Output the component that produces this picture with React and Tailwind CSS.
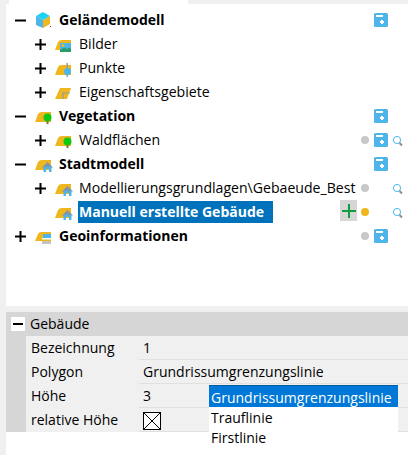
import React from 'react';

const Expander = ({ open }) => (
  <svg width="11" height="11" viewBox="0 0 11 11" className="block">
    <rect x="0" y="4.5" width="11" height="2" fill="#000" />
    {!open && <rect x="4.5" y="0" width="2" height="11" fill="#000" />}
  </svg>
);

const Base = () => <path d="M0 15 L3 7 Q4 5 7 5 H16 V15 Z" fill="#efb71d" />;

const House = () => (
  <>
    <path d="M7 12.5 L12.5 7 L18 12.5 Z" fill="#7d96ab" />
    <path d="M8.5 12 H16.5 V17 H14 V14 H11 V17 H8.5 Z" fill="#4db5ea" />
  </>
);

const Tree = () => (
  <>
    <rect x="11.5" y="13" width="2" height="4" fill="#8a6d3b" />
    <circle cx="12.5" cy="10.5" r="4" fill="#12c912" />
  </>
);

const NodeIcon = ({ type }) => (
  <svg width="18" height="18" viewBox="0 0 18 18" className="block">
    {type === 'cube' && (
      <>
        <path d="M1 5 L8 9 V17 L2 14.5 Q1 14 1 13 Z" fill="#4db5ea" />
        <path d="M8 9 L15 5 V13 L8 17 Z" fill="#efb71d" />
        <path d="M1 5 L7 1.5 Q8 1 9 1.5 L15 5 L8 9 Z" fill="#1fd0f7" />
        <rect x="15" y="15" width="1" height="1" fill="#e81123" />
      </>
    )}
    {type === 'images' && (
      <>
        <Base />
        <rect x="5" y="8" width="11" height="9" fill="#4db5ea" />
        <circle cx="8" cy="10.5" r="1.4" fill="#efb71d" />
        <path d="M5 17 V15 L9 12.5 L12 14 L14 12.5 L16 14 V17 Z" fill="#2b9b6a" />
      </>
    )}
    {type === 'points' && (
      <>
        <path d="M0 16 L3 8 Q4 6 7 6 H16 V16 Z" fill="#efb71d" />
        <rect x="11.5" y="4" width="1.4" height="14" fill="#8f9aa3" />
        <circle cx="12.5" cy="12.5" r="3.5" fill="#4db5ea" />
      </>
    )}
    {type === 'areas' && (
      <>
        <path d="M0 16 L5 5 H16 L12 16 Z" fill="#efb71d" />
        <path d="M7 10 H15 M8 10 V16" stroke="#8f9aa3" strokeWidth="1.2" fill="none" />
      </>
    )}
    {type === 'tree' && (
      <>
        <Base />
        <Tree />
      </>
    )}
    {type === 'city' && (
      <>
        <Base />
        <House />
      </>
    )}
    {type === 'geo' && (
      <>
        <path d="M0 14 L3 7 Q4 5 6 5 H16 V14 Z" fill="#efb71d" />
        <rect x="8" y="7" width="8" height="4" fill="#4db5ea" />
        <rect x="7" y="11" width="9" height="1.5" fill="#ffffff" />
        <rect x="7" y="14" width="9" height="3" fill="#c4c4c4" />
      </>
    )}
  </svg>
);

const SaveIcon = () => (
  <svg width="14" height="14" viewBox="0 0 14 14" className="block">
    <rect x="0" y="0" width="14" height="14" rx="1.5" fill="#4db5ea" />
    <rect x="2" y="2" width="7" height="2" fill="#fff" />
    <path d="M7 7 h2 v1 h1 v2 h-1 v1 h-2 v-1 h-1 v-2 h1 Z" fill="#fff" />
  </svg>
);

const SearchIcon = () => (
  <svg width="10" height="11" viewBox="0 0 10 11" className="block">
    <circle cx="4" cy="4" r="3.6" fill="none" stroke="#4db5ea" strokeWidth="1" />
    <path d="M6.5 7 L9 9.5" stroke="#8c8c8c" strokeWidth="2" />
  </svg>
);

const nodes = [
  { label: 'Geländemodell', icon: 'cube', level: 0, open: true, bold: true, save: true },
  { label: 'Bilder', icon: 'images', level: 1 },
  { label: 'Punkte', icon: 'points', level: 1 },
  { label: 'Eigenschaftsgebiete', icon: 'areas', level: 1 },
  { label: 'Vegetation', icon: 'tree', level: 0, open: true, bold: true, save: true },
  { label: 'Waldflächen', icon: 'tree', level: 1, dot: 'bg-[#c8c8c8]', save: true, search: true },
  { label: 'Stadtmodell', icon: 'city', level: 0, open: true, bold: true, save: true },
  { label: 'Modellierungsgrundlagen\\Gebaeude_Best', icon: 'city', level: 1, dot: 'bg-[#c8c8c8]', search: true },
  { label: 'Manuell erstellte Gebäude', icon: 'city', level: 1, leaf: true, bold: true, selected: true, add: true, dot: 'bg-[#efb71d]', search: true },
  { label: 'Geoinformationen', icon: 'geo', level: 0, bold: true, dot: 'bg-[#c8c8c8]', save: true },
];

const TreeRow = ({ node }) => (
  <div className="flex items-center h-6">
    <div className={`flex items-center shrink-0 ${node.level === 1 ? 'pl-[29px]' : 'pl-[9px]'}`}>
      <div className="w-[11px]">{!node.leaf && <Expander open={node.open} />}</div>
      <div className="ml-[9px] w-[18px]">
        <NodeIcon type={node.icon} />
      </div>
    </div>
    <div className="flex-1 min-w-0 pl-[5px] pr-[3px] flex">
      <span
        className={`h-[22px] leading-[22px] pl-[1px] whitespace-nowrap ${
          node.bold ? 'font-bold text-[14px]' : 'text-[14.1px]'
        } ${node.selected ? 'bg-[#0072bc] text-white w-[195px]' : 'text-black'}`}
      >
        {node.label}
      </span>
    </div>
    {node.add && (
      <div className="w-[17px] h-[21px] -mt-[3px] mr-[4px] shrink-0 bg-[#d6d6d6] flex items-center justify-center">
        <svg width="14" height="14" viewBox="0 0 14 14">
          <rect x="0" y="6" width="14" height="2" fill="#109c3f" />
          <rect x="6" y="0" width="2" height="14" fill="#109c3f" />
        </svg>
      </div>
    )}
    <div className="flex items-center shrink-0 w-[47px]">
      <div className="w-2 h-2">{node.dot && <div className={`w-2 h-2 rounded-full ${node.dot}`} />}</div>
      <div className="w-[14px] h-[14px] ml-[5px]">{node.save && <SaveIcon />}</div>
      <div className="ml-[5px] mt-[3px] w-[10px]">{node.search && <SearchIcon />}</div>
    </div>
  </div>
);

const props = [
  { name: 'Bezeichnung', value: '1' },
  { name: 'Polygon', value: 'Grundrissumgrenzungslinie' },
  { name: 'Höhe', value: '3' },
  { name: 'relative Höhe', check: true },
];

const App = () => {
  return (
    <div
      className="w-[408px] h-[455px] bg-[#f0f0f0] pl-[6px] overflow-hidden text-black"
      style={{ fontFamily: '"Open Sans", "Noto Sans", sans-serif' }}
    >
      <div className="h-[4px] flex">
        <div className="ml-[3px] w-[179px] bg-white" />
      </div>

      {/* Tree */}
      <div className="bg-white h-[302px] pt-[4px]">
        {nodes.map(node => (
          <TreeRow key={node.label} node={node} />
        ))}
      </div>

      <div className="h-[6px]" />

      {/* Property panel */}
      <div className="relative">
        <div className="h-6 bg-[#d6d6d6] flex items-center pl-[5px]">
          <div className="w-[14px] h-[14px] bg-white flex items-center justify-center">
            <svg width="10" height="2" viewBox="0 0 10 2" className="block">
              <rect width="10" height="2" fill="#000" />
            </svg>
          </div>
          <span className="ml-[5px] text-[14px] leading-[22px] mb-[1px]">Gebäude</span>
        </div>
        <div className="bg-[#d6d6d6] pl-[20px]">
          {props.map(p => (
            <div key={p.name} className="flex h-6 text-[14px] leading-[23px]">
              <div className="w-[113px] bg-[#f0f0f0] pl-[5px]">{p.name}</div>
              <div className="flex-1 bg-[#f0f0f0] border-b border-[#e0e0e0] pl-[4px]">
                {p.check ? (
                  <svg width="18" height="18" viewBox="0 0 18 18" className="mt-[4px] block">
                    <rect x="0.5" y="0.5" width="17" height="17" fill="#fff" stroke="#000" />
                    <path d="M1 1 L17 17 M17 1 L1 17" stroke="#000" strokeWidth="1" />
                  </svg>
                ) : (
                  p.value
                )}
              </div>
            </div>
          ))}
        </div>
        <div className="h-[23px] bg-white" />

        {/* Open combo list */}
        <div className="absolute z-10 left-[203px] top-[73px] w-[189px] bg-white text-[14px] border-t border-[#005a9e]">
          <div className="h-[21px] leading-[23px] bg-[#0078d7] text-white pl-[2px]">Grundrissumgrenzungslinie</div>
          <div className="h-[21px] leading-[21px] pl-[2px]">Trauflinie</div>
          <div className="h-[20px] leading-[20px] pl-[2px]">Firstlinie</div>
        </div>
      </div>
    </div>
  );
};

export default App;
